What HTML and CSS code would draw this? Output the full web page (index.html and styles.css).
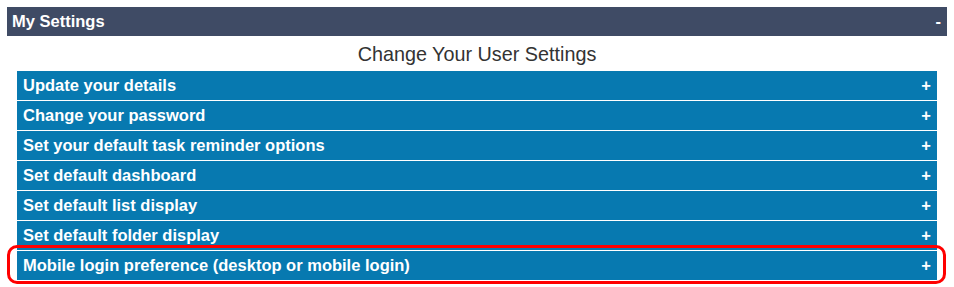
FILE: index.html
```html
<!DOCTYPE html>
<html>
<head>
<meta charset="utf-8">
<link rel="stylesheet" href="styles.css">
</head>
<body>
<div class="panel">
  <div class="panel-head"><span>My Settings</span><span class="toggle">-</span></div>
  <h2 class="title">Change Your User Settings</h2>
  <div class="list">
    <div class="row"><span>Update your details</span><span class="plus">+</span></div>
    <div class="row"><span>Change your password</span><span class="plus">+</span></div>
    <div class="row"><span>Set your default task reminder options</span><span class="plus">+</span></div>
    <div class="row"><span>Set default dashboard</span><span class="plus">+</span></div>
    <div class="row"><span>Set default list display</span><span class="plus">+</span></div>
    <div class="row"><span>Set default folder display</span><span class="plus">+</span></div>
    <div class="row highlight"><span>Mobile login preference (desktop or mobile login)</span><span class="plus">+</span></div>
  </div>
</div>
</body>
</html>
```
FILE: styles.css
```css
html, body { margin: 0; padding: 0; background: #fff; }
body { padding: 7px; font-family: "Liberation Sans", Arial, sans-serif; }
.panel { width: 940px; }
.panel-head {
  background: #3f4b65;
  color: #fff;
  font-weight: bold;
  font-size: 16.5px;
  height: 29px;
  display: flex;
  align-items: center;
  justify-content: space-between;
  padding: 0 5px;
}
.toggle { padding-right: 1px; }
.title {
  margin: 0;
  height: 34px;
  display: flex;
  align-items: center;
  justify-content: center;
  font-size: 19.8px;
  font-weight: normal;
  color: #333;
  padding-top: 1px;
}
.list {
  margin: 0 10px;
  display: flex;
  flex-direction: column;
  gap: 1px;
}
.row {
  position: relative;
  background: #0779b0;
  color: #fff;
  font-weight: bold;
  font-size: 16.5px;
  height: 29px;
  display: flex;
  align-items: center;
  justify-content: space-between;
  padding: 0 5px 0 6px;
}
.plus { font-size: 16.5px; padding-right: 1px; }
.highlight::after {
  content: "";
  position: absolute;
  left: -10px;
  right: -9px;
  top: -6px;
  bottom: -4px;
  border: 3px solid #ff0000;
  border-radius: 10px;
  pointer-events: none;
}
```
